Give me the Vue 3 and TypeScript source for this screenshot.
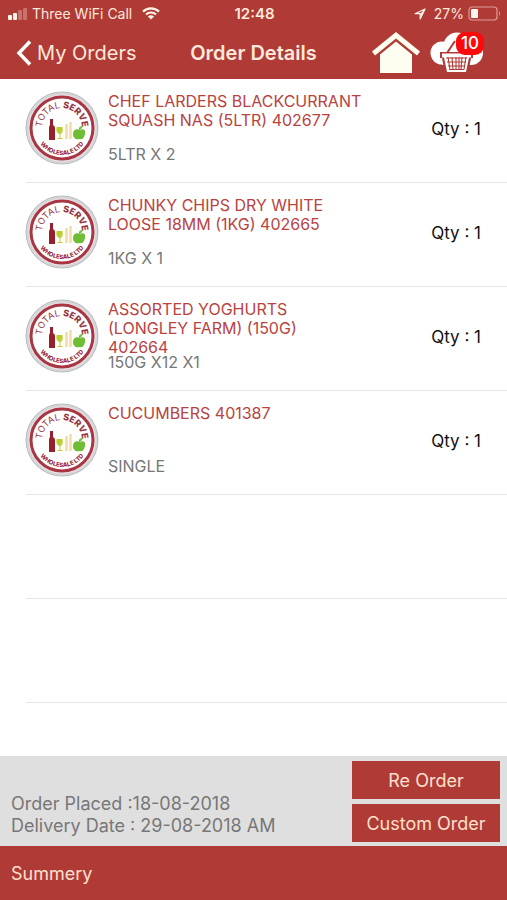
<script setup lang="ts">
interface OrderItem {
  name: string
  pack: string
  qty: number
}

const items: OrderItem[] = [
  { name: 'CHEF LARDERS BLACKCURRANT\nSQUASH NAS (5LTR) 402677', pack: '5LTR X 2', qty: 1 },
  { name: 'CHUNKY CHIPS DRY WHITE\nLOOSE 18MM (1KG) 402665', pack: '1KG X 1', qty: 1 },
  { name: 'ASSORTED YOGHURTS\n(LONGLEY FARM) (150G)\n402664', pack: '150G X12 X1', qty: 1 },
  { name: 'CUCUMBERS 401387', pack: 'SINGLE', qty: 1 },
]
const emptyRows = 2
const basketCount = 10
</script>

<template>
  <div class="screen">
    <header class="top">
      <div class="status">
        <div class="status-side">
          <svg class="signal" width="20" height="12" viewBox="0 0 20 12" aria-hidden="true">
            <rect x="0" y="7" width="4" height="5" rx="1" />
            <rect x="5" y="5" width="4" height="7" rx="1" />
            <rect x="10" y="2" width="4" height="10" rx="1" opacity="0.3" />
            <rect x="15" y="0" width="4" height="12" rx="1" opacity="0.3" />
          </svg>
          <span class="carrier">Three WiFi Call</span>
          <svg class="wifi" width="18" height="13" viewBox="0 0 18 13" aria-hidden="true">
            <path d="M1 4.6a11.3 11.3 0 0 1 16 0M4 7.6a7 7 0 0 1 10 0" fill="none" stroke="#fff4ea" stroke-width="2.2" />
            <path d="M9 12.6 5.9 9.5a4.4 4.4 0 0 1 6.2 0z" />
          </svg>
        </div>
        <span class="clock">12:48</span>
        <div class="status-side right">
          <svg width="12" height="12" viewBox="0 0 12 12" aria-hidden="true">
            <path d="M11 1 1 5.7h5.2v5.2z" fill="none" stroke="#fff4ea" stroke-width="1.2" stroke-linejoin="round" />
            <path d="M11 1 6.2 5.7v5.2z" />
          </svg>
          <span class="percent">27%</span>
          <svg width="33" height="15" viewBox="0 0 33 15" aria-hidden="true">
            <rect x="1" y="1" width="28" height="13" rx="3" fill="none" stroke="#dc9c96" stroke-width="1.2" />
            <rect x="3" y="3" width="7" height="9" rx="1" />
            <path d="M31 5q2 2.5 0 5z" fill="#dc9c96" />
          </svg>
        </div>
      </div>
      <nav class="nav">
        <a class="back" href="#orders">
          <svg width="16" height="26" viewBox="0 0 16 26" aria-hidden="true">
            <path d="M14 1.5 3 13l11 11.5" fill="none" stroke="#fff" stroke-width="3.5" />
          </svg>
          <span>My Orders</span>
        </a>
        <h1>Order Details</h1>
        <div class="actions">
          <a class="home" href="#home" aria-label="Home">
            <svg width="48" height="42" viewBox="0 0 48 42">
              <path d="M24 0 48 19.5l-3 4L24 6.5 3 23.5l-3-4z" fill="#fffdf0" />
              <path d="M24 9.500 40 22.500V41H8V22.500z" fill="#fffdf0" />
            </svg>
          </a>
          <a class="basket" href="#basket" aria-label="Basket">
            <svg width="54" height="42" viewBox="0 0 54 42">
              <g fill="#fff">
                <circle cx="12" cy="21" r="11.5" />
                <circle cx="27" cy="14" r="13.5" />
                <circle cx="41" cy="21" r="12" />
                <path d="M12 16h30v17H12z" />
              </g>
              <path d="M10 20h33v6h-2l-3 16H15l-3-16h-2z" fill="#b03a36" />
              <path d="m25 9-8 12M30 9l8 12" stroke="#b03a36" stroke-width="2" />
              <path d="M12 21.500h29v4h-2l-3 14.500H17l-3-14.500h-2z" fill="#fff" />
              <path d="M16 26h21M17 30h19M18 34h17M19 37.500h15M18 25l2 12.500M22 25l1 12.500M26 25v12.500M29 25v12.500M32 25l-1 12.500M36 25l-2 12.500" fill="none" stroke="#b03a36" stroke-width="1.1" />
            </svg>
            <span class="badge">{{ basketCount }}</span>
          </a>
        </div>
      </nav>
    </header>

    <main class="content">
      <ul class="list">
        <li v-for="(item, i) in items" :key="item.name" class="row">
          <svg class="logo" width="74" height="74" viewBox="0 0 74 74" role="img" aria-label="Total Serve Wholesale Ltd">
            <defs>
              <path :id="`arc-top-${i}`" d="M17 37A20 20 0 0 1 57 37" />
              <path :id="`arc-bottom-${i}`" d="M10 37a27 27 0 0 0 54 0" />
            </defs>
            <circle cx="37" cy="37" r="36" fill="#d5d6d9" stroke="#b9bbbf" stroke-width="1" />
            <circle cx="37" cy="37" r="33.5" fill="#eee2e3" />
            <circle cx="37" cy="37" r="31" fill="#fff" stroke="#a93643" stroke-width="3" />
            <text class="logo-top">
              <textPath :href="`#arc-top-${i}`" startOffset="50%" text-anchor="middle">TOTAL <tspan class="heavy">SERVE</tspan></textPath>
            </text>
            <text class="logo-bottom">
              <textPath :href="`#arc-bottom-${i}`" startOffset="50%" text-anchor="middle">WHOLESALE LTD</textPath>
            </text>
            <path d="M25 28h3v6q2 1 2 3v12h-6V37q0-2 1-3z" fill="#96202d" />
            <path d="M31.500 36h6q1 6-2 7v4h2v1h-5v-1h2v-4q-4-1-3-7z" fill="#bccf32" />
            <path d="M41.500 33v15M45.500 31v17" stroke="#f0dfa0" stroke-width="2.5" />
            <g transform="translate(0 1)" fill="#6fbd34">
              <path d="M55 38c3-2 6 0 5 4-1 5-4 6-6 5-3 1-6-1-6-5s3-6 7-4z" />
              <path d="M54 38q-1-4 4-4-1 3-4 4" />
            </g>
          </svg>
          <div class="info">
            <h2>{{ item.name }}</h2>
            <p>{{ item.pack }}</p>
          </div>
          <span class="qty">Qty : {{ item.qty }}</span>
        </li>
        <li v-for="n in emptyRows" :key="n" class="row" aria-hidden="true"></li>
      </ul>
    </main>

    <section class="panel">
      <div class="dates">
        <p>Order Placed :18-08-2018</p>
        <p>Delivery Date : 29-08-2018 AM</p>
      </div>
      <div class="buttons">
        <button type="button">Re Order</button>
        <button type="button">Custom Order</button>
      </div>
    </section>
    <footer class="summary">Summery</footer>
  </div>
</template>

<style>
body {
  margin: 0;
}
</style>

<style scoped>
.screen {
  display: flex;
  flex-direction: column;
  min-height: 100vh;
  background: #fff;
  font-family: Inter, "Liberation Sans", sans-serif;
}
h1,
h2,
p,
ul {
  margin: 0;
  padding: 0;
}
a {
  color: inherit;
  text-decoration: none;
}
svg {
  display: block;
  flex: none;
}
.top {
  background: #b03a36;
  color: #ffe9dc;
}
.status {
  display: grid;
  grid-template-columns: 1fr auto 1fr;
  align-items: center;
  height: 27px;
  padding: 0 6px 0 8px;
  font-size: 14px;
}
.status svg {
  fill: #fff4ea;
}
.status-side {
  display: flex;
  align-items: center;
  gap: 4px;
}
.right {
  justify-content: flex-end;
}
.percent {
  margin-left: 4px;
}
.wifi {
  margin-left: 6px;
}
.clock {
  font-size: 15px;
  font-weight: 600;
}
.nav {
  display: grid;
  grid-template-columns: 1fr auto 1fr;
  align-items: center;
  height: 52px;
  padding: 0 16px;
}
.back {
  display: flex;
  align-items: center;
  gap: 5px;
  font-size: 20px;
}
h1 {
  font-size: 20px;
  font-weight: 600;
}
.actions {
  display: flex;
  justify-content: flex-end;
  gap: 10px;
  padding-right: 7px;
}
.basket {
  position: relative;
}
.badge {
  position: absolute;
  top: 0;
  right: 0;
  padding: 0 5px;
  border-radius: 9px;
  background: #fb0a0d;
  color: #fff;
  font-size: 17px;
  font-weight: 500;
  line-height: 23px;
}
.content {
  flex: 1;
}
.list {
  list-style: none;
}
.row {
  display: flex;
  box-sizing: border-box;
  height: 104px;
  margin-left: 26px;
  padding-right: 26px;
  border-bottom: 1px solid #e6e6e6;
}
.logo {
  margin: 12px 9px 0 -1px;
}
.logo-top {
  fill: #9a3340;
  font-size: 9px;
}
.logo-bottom {
  fill: #a02838;
  font-size: 6px;
  font-weight: 800;
}
.heavy {
  font-weight: 800;
}
.info {
  flex: 1;
  padding-top: 13px;
}
.info h2 {
  min-height: 57px;
  color: #b8433f;
  font-size: 16px;
  font-weight: 400;
  line-height: 19px;
  white-space: pre-line;
}
.info p {
  color: #777;
  font-size: 16px;
  line-height: 10px;
}
.qty {
  color: #111;
  font-size: 17px;
  line-height: 100px;
}
.panel {
  display: flex;
  align-items: flex-end;
  justify-content: space-between;
  padding: 5px 7px 4px 11px;
  background: #dfdfdf;
}
.dates {
  padding-bottom: 5px;
  color: #777;
  font-size: 18px;
  line-height: 22px;
}
.buttons {
  display: flex;
  flex-direction: column;
  gap: 5px;
  width: 148px;
}
button {
  height: 38px;
  padding: 0;
  border: 0;
  background: #b03a36;
  color: #ffe0cd;
  font: inherit;
  font-size: 18px;
}
.summary {
  padding: 2px 11px 0;
  background: #b03a36;
  color: #ffe0cd;
  font-size: 18px;
  line-height: 52px;
}
</style>
